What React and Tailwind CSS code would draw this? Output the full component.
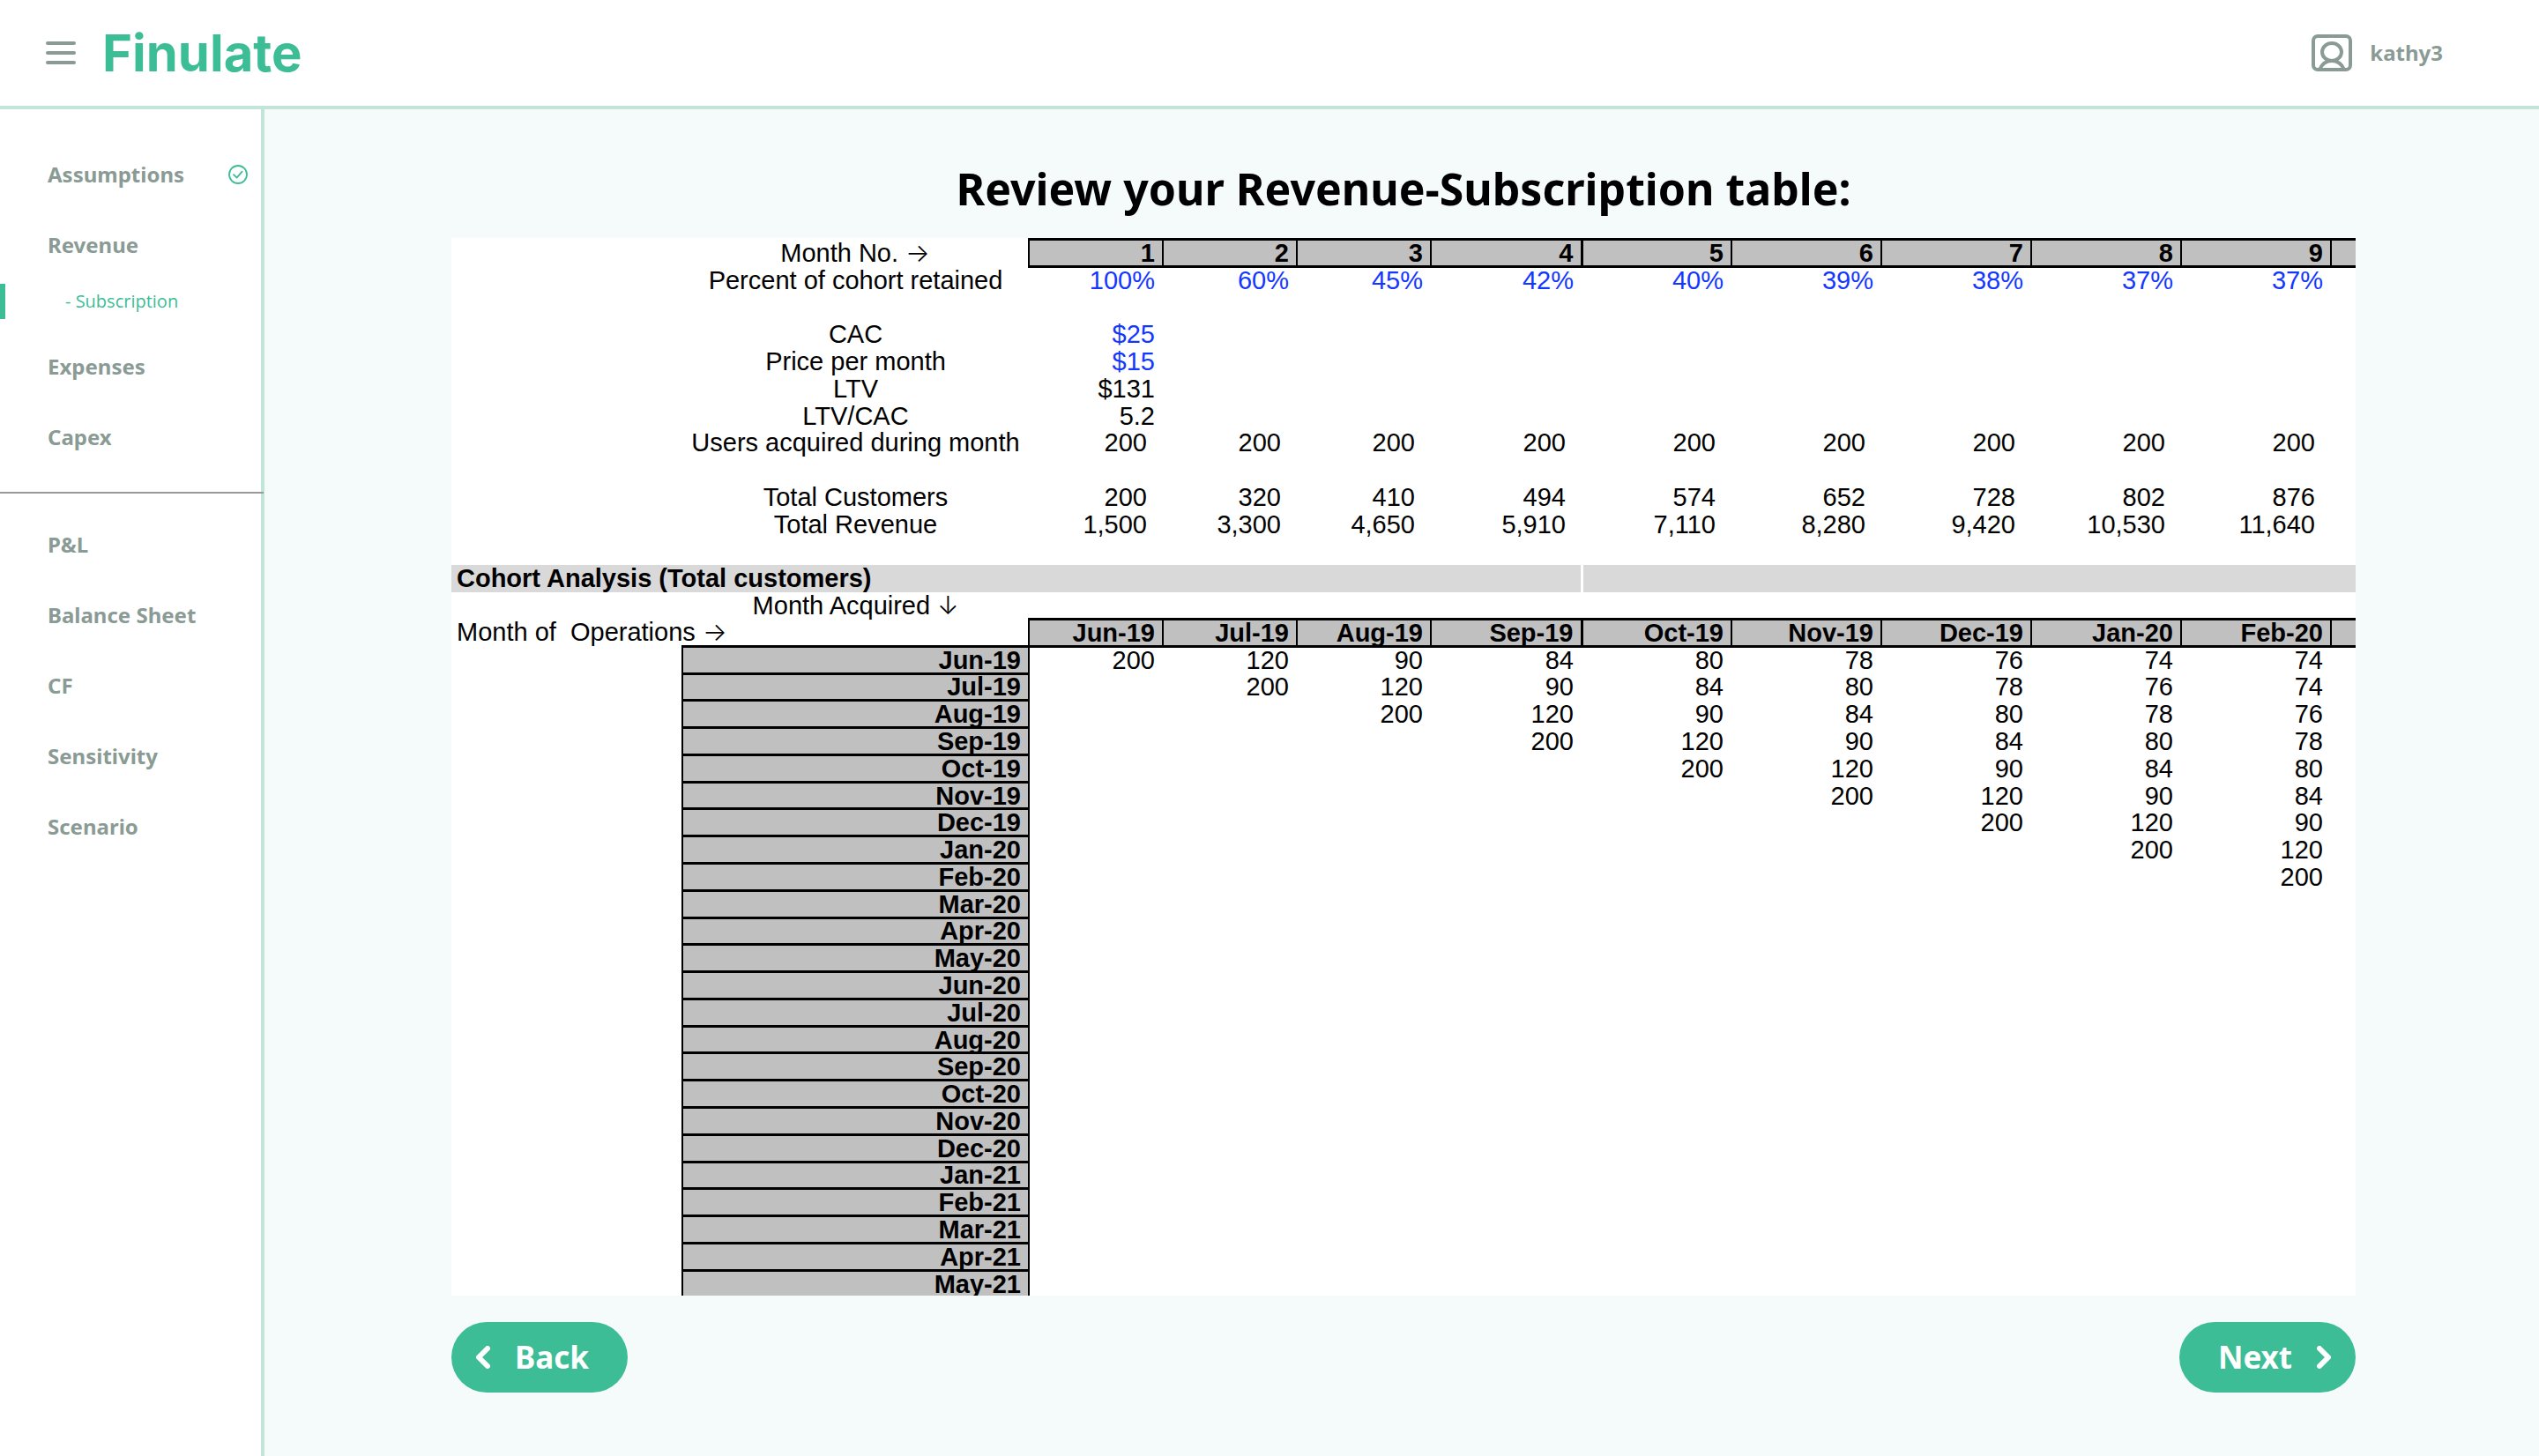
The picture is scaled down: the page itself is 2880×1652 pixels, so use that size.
const months = [
  'Jun-19', 'Jul-19', 'Aug-19', 'Sep-19', 'Oct-19', 'Nov-19', 'Dec-19', 'Jan-20',
  'Feb-20', 'Mar-20', 'Apr-20', 'May-20', 'Jun-20', 'Jul-20', 'Aug-20', 'Sep-20',
  'Oct-20', 'Nov-20', 'Dec-20', 'Jan-21', 'Feb-21', 'Mar-21', 'Apr-21', 'May-21',
];
const visible = months.slice(0, 9);
const retained = ['100%', '60%', '45%', '42%', '40%', '39%', '38%', '37%', '37%'];
const cohort = [200, 120, 90, 84, 80, 78, 76, 74, 74];
const users = visible.map(() => '200');
const customers = ['200', '320', '410', '494', '574', '652', '728', '802', '876'];
const revenue = ['1,500', '3,300', '4,650', '5,910', '7,110', '8,280', '9,420', '10,530', '11,640'];

const headCell = 'border-x-2 border-y-3 border-black bg-[#c0c0c0] p-0 pr-2 text-right font-bold';

function Arrow({ children }) {
  return <span className="font-['Inter',sans-serif] font-light">{children}</span>;
}

function MetricRow({ label, values = [], blue = false, inset = false }) {
  return (
    <tr>
      <td className="p-0" />
      <th scope="row" className="p-0 text-center font-normal">{label}</th>
      {visible.map((m, i) => (
        <td
          key={m}
          className={`p-0 text-right ${inset ? 'pr-[18px]' : 'pr-[9px]'} ${blue ? 'text-[#1437ff]' : ''}`}
        >
          {values[i]}
        </td>
      ))}
      <td className="p-0" />
    </tr>
  );
}

function BlankRow() {
  return (
    <tr>
      <td colSpan={12} className="p-0">&nbsp;</td>
    </tr>
  );
}

function HeaderCells({ items }) {
  return (
    <>
      {items.map((item, i) => (
        <th key={item} scope="col" className={`${headCell} ${i === 4 ? 'border-l-3' : ''}`}>{item}</th>
      ))}
      <td className="border-y-3 border-l-2 border-black bg-[#c0c0c0] p-0" />
    </>
  );
}

function RevenueTable() {
  return (
    <table className="h-[1204px] w-full table-fixed border-collapse whitespace-nowrap font-['Liberation_Sans',Arial,sans-serif] text-[29px] leading-[26px] text-black [&_tr]:h-[30px]">
      <colgroup>
        <col className="w-[262px]" />
        <col className="w-[393px]" />
        <col span={3} className="w-[152px]" />
        <col className="w-[171px]" />
        <col span={5} className="w-[170px]" />
        <col />
      </colgroup>
      <tbody>
        <tr>
          <td className="p-0" />
          <th scope="row" className="p-0 text-center font-normal">Month No. <Arrow>→</Arrow></th>
          <HeaderCells items={['1', '2', '3', '4', '5', '6', '7', '8', '9']} />
        </tr>
        <MetricRow label="Percent of cohort retained" values={retained} blue />
        <BlankRow />
        <MetricRow label="CAC" values={['$25']} blue />
        <MetricRow label="Price per month" values={['$15']} blue />
        <MetricRow label="LTV" values={['$131']} />
        <MetricRow label="LTV/CAC" values={['5.2']} />
        <MetricRow label="Users acquired during month" values={users} inset />
        <BlankRow />
        <MetricRow label="Total Customers" values={customers} inset />
        <MetricRow label="Total Revenue" values={revenue} inset />
        <BlankRow />
        <tr>
          <th colSpan={6} className="border-r-3 border-white bg-[#d9d9d9] p-0 pl-1.5 text-left font-bold">
            Cohort Analysis (Total customers)
          </th>
          <td colSpan={6} className="bg-[#d9d9d9] p-0" />
        </tr>
        <MetricRow label={<>Month Acquired <Arrow>↓</Arrow></>} />
        <tr>
          <th colSpan={2} scope="row" className="whitespace-pre p-0 pl-1.5 text-left font-normal">
            {'Month of  Operations '}<Arrow>→</Arrow>
          </th>
          <HeaderCells items={visible} />
        </tr>
        {months.map((month, row) => (
          <tr key={month}>
            <td className="p-0" />
            <th scope="row" className={headCell}>{month}</th>
            {visible.map((m, col) => (
              <td key={m} className="p-0 pr-[9px] text-right">{col >= row ? cohort[col - row] : ''}</td>
            ))}
            <td className="p-0" />
          </tr>
        ))}
      </tbody>
    </table>
  );
}

function NavItem({ label, done = false }) {
  return (
    <li>
      <a href="#" className="flex h-20 items-center justify-between pr-[15px] pl-[54px]">
        {label}
        {done && (
          <svg viewBox="0 0 22 22" className="size-[22px]" fill="none" stroke="#3cbd96" strokeWidth="1.8" strokeLinecap="round" strokeLinejoin="round">
            <circle cx="11" cy="11" r="10" />
            <path d="M6 11.2 L9.6 14.6 L15.6 7.6" />
          </svg>
        )}
      </a>
    </li>
  );
}

export default function App() {
  return (
    <div className="flex h-screen flex-col bg-[#f5fbfb] font-['Noto_Sans',sans-serif]">
      <header className="flex shrink-0 items-center justify-between border-b-4 border-[#bfe6d9] bg-white pr-[109px] pl-[52px]">
        <div className="flex h-[120px] items-center gap-[30px]">
          <button type="button" aria-label="Toggle menu" className="flex flex-col gap-[7px]">
            <span className="h-1 w-[34px] rounded-full bg-[#8a9b95]" />
            <span className="h-1 w-[34px] rounded-full bg-[#8a9b95]" />
            <span className="h-1 w-[34px] rounded-full bg-[#8a9b95]" />
          </button>
          <a href="#" className="font-['Inter',sans-serif] text-[58px] leading-[60px] font-bold text-[#3cbd96]">Finulate</a>
        </div>
        <button type="button" className="flex items-center gap-5 text-[24px] font-bold text-[#8a9b95]">
          <svg viewBox="0 0 46 42" className="h-[42px] w-[46px]" fill="none" stroke="currentColor" strokeWidth="4">
            <rect x="2" y="2" width="42" height="38" rx="5" />
            <ellipse cx="23" cy="20" rx="11" ry="10" />
            <path d="M9 40 C12 33 17 30 23 30 C29 30 34 33 37 40" />
          </svg>
          kathy3
        </button>
      </header>
      <div className="flex min-h-0 flex-1">
        <nav className="w-[300px] shrink-0 border-r-4 border-[#bfe6d9] bg-white pt-[34px] text-[24px] font-bold text-[#8a9b95]">
          <ul>
            <NavItem label="Assumptions" done />
            <NavItem label="Revenue" />
            <li className="mt-1 mb-3.5">
              <a href="#" aria-current="page" className="flex h-10 items-center border-l-6 border-[#3cbd96] pl-[68px] font-['Open_Sans',sans-serif] text-[20px] font-normal text-[#3cbd96]">
                - Subscription
              </a>
            </li>
            <NavItem label="Expenses" />
            <NavItem label="Capex" />
          </ul>
          <hr className="mt-[22px] mb-[18px] -mr-[3px] border-t-2 border-[#999999]" />
          <ul>
            <NavItem label="P&L" />
            <NavItem label="Balance Sheet" />
            <NavItem label="CF" />
            <NavItem label="Sensitivity" />
            <NavItem label="Scenario" />
          </ul>
        </nav>
        <main className="flex min-w-0 flex-1 flex-col pt-14 pr-[208px] pb-[72px] pl-[212px]">
          <h1 className="mb-[22px] text-center text-[50px] leading-[68px] font-bold text-black">
            Review your Revenue-Subscription table:
          </h1>
          <div className="min-h-0 flex-1 overflow-hidden bg-white">
            <RevenueTable />
          </div>
          <div className="mt-[30px] flex justify-between text-[35px] font-bold text-white">
            <button type="button" className="flex h-20 w-[200px] items-center gap-7 rounded-full bg-[#3cbd96] pl-7">
              <svg viewBox="0 0 16 26" className="h-[26px] w-4" fill="none" stroke="currentColor" strokeWidth="6" strokeLinecap="round" strokeLinejoin="round">
                <path d="M13 3 L3 13 L13 23" />
              </svg>
              Back
            </button>
            <button type="button" className="flex h-20 w-[200px] items-center justify-end gap-7 rounded-full bg-[#3cbd96] pr-7">
              Next
              <svg viewBox="0 0 16 26" className="h-[26px] w-4" fill="none" stroke="currentColor" strokeWidth="6" strokeLinecap="round" strokeLinejoin="round">
                <path d="M3 3 L13 13 L3 23" />
              </svg>
            </button>
          </div>
        </main>
      </div>
    </div>
  );
}
